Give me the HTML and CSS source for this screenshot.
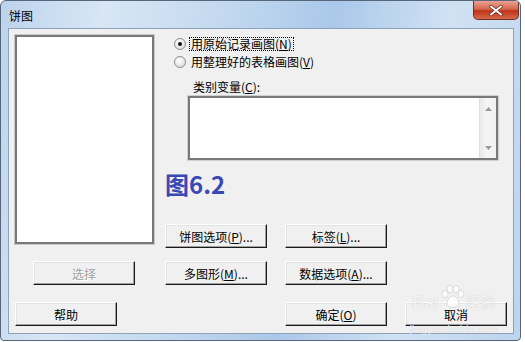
FILE: index.html
```html
<!DOCTYPE html>
<html lang="zh-CN">
<head>
  <meta charset="UTF-8" />
  <title>饼图</title>
  <link rel="stylesheet" href="styles.css">
</head>
<body>
  <div class="window">
    <div class="titlebar">
      <span class="title">饼图</span>
      <div class="close">
        <svg width="14" height="11" viewBox="0 0 14 11">
          <path d="M2 1.5 L12 9.5 M12 1.5 L2 9.5" stroke="#6b2a20" stroke-width="3.4" stroke-linecap="round" />
          <path d="M2 1.5 L12 9.5 M12 1.5 L2 9.5" stroke="#fff" stroke-width="2" stroke-linecap="round" />
        </svg>
      </div>
    </div>

    <div class="client">
      <div class="main">
        <div class="left-col">
          <div class="listbox"></div>
          <button class="btn btn-select" disabled>选择</button>
        </div>

        <div class="right-col">
          <label class="radio">
            <span class="dot checked"></span>
            <span class="radio-text focus">用原始记录画图(<u>N</u>)</span>
          </label>
          <label class="radio">
            <span class="dot"></span>
            <span class="radio-text">用整理好的表格画图(<u>V</u>)</span>
          </label>

          <div class="field-label">类别变量(<u>C</u>):</div>
          <div class="textbox">
            <div class="vscroll">
              <svg width="7" height="4" viewBox="0 0 7 4"><path d="M0 4 L3.5 0 L7 4 Z" fill="#9a9a9a" /></svg>
              <svg width="7" height="4" viewBox="0 0 7 4"><path d="M0 0 L3.5 4 L7 0 Z" fill="#9a9a9a" /></svg>
            </div>
          </div>

          <div class="figure">图6.2</div>

          <div class="btn-grid">
            <button class="btn">饼图选项(<u>P</u>)...</button>
            <button class="btn">标签(<u>L</u>)...</button>
            <button class="btn">多图形(<u>M</u>)...</button>
            <button class="btn">数据选项(<u>A</u>)...</button>
          </div>
        </div>
      </div>

      <div class="footer">
        <button class="btn">帮助</button>
        <button class="btn btn-ok">确定(<u>O</u>)</button>
        <button class="btn btn-cancel">取消</button>
      </div>
    </div>

    <!-- baidu watermark over the bottom-right corner -->
    <div class="watermark">
      <div class="wm-row">
        <span class="wm-bai">Bai</span>
        <svg class="wm-paw" width="27" height="24" viewBox="0 0 27 24">
          <g fill="rgba(255,255,255,0.8)" stroke="rgba(150,150,150,0.35)" stroke-width="0.8">
            <ellipse cx="6" cy="9" rx="3" ry="3.6" />
            <ellipse cx="11" cy="4" rx="3" ry="3.6" />
            <ellipse cx="17" cy="4" rx="3" ry="3.6" />
            <ellipse cx="22" cy="9" rx="3" ry="3.6" />
            <path d="M8 20 C8 14 11 11 14 11 C17 11 20 14 20 20 C20 23 8 23 8 20 Z" />
          </g>
        </svg>
        <span class="wm-cn">经验</span>
      </div>
      <span class="wm-url">jingyan.baidu.com</span>
    </div>
  </div>
</body>
</html>
```

FILE: styles.css
```css
body {
  margin: 0;
  background: #fff;
  font-family: "Noto Sans CJK SC", "DejaVu Sans", sans-serif;
  font-size: 12px;
  color: #000;
}
.window {
  position: relative;
  width: 519px;
  height: 339px;
  border: 1px solid #56677c;
  border-radius: 6px 6px 4px 4px;
  background: linear-gradient(100deg, #bcd3ec 0%, #d8e6f5 18%, #c4d9ef 38%, #aac8ea 58%, #d0e1f3 78%, #bdd4ee 100%);
  display: flex;
  flex-direction: column;
  overflow: hidden;
}
.titlebar {
  height: 27px;
  display: flex;
  align-items: flex-start;
}
.title {
  margin: 7px 0 0 8px;
  line-height: 16px;
  font-size: 12px;
}
.close {
  margin-left: auto;
  margin-right: 1px;
  width: 46px;
  height: 19px;
  box-sizing: border-box;
  border: 1px solid #6e3027;
  border-top: none;
  border-radius: 0 0 5px 5px;
  background: linear-gradient(#eba293 0%, #d4664f 45%, #bd3419 55%, #d8674a 100%);
  display: flex;
  align-items: center;
  justify-content: center;
}
.client {
  flex: 1;
  margin: 0 6px 6px 7px;
  padding: 6px;
  background: #f0f0f0;
  border: 1px solid #8ea3bb;
}
.main {
  display: flex;
}
.left-col {
  width: 139px;
  display: flex;
  flex-direction: column;
}
.listbox {
  height: 209px;
  box-sizing: border-box;
  background: #fff;
  border: 2px solid #787878;
  box-shadow: 0 0 0 1px #c9c9c9;
}
.right-col {
  margin-left: 11px;
  flex: 1;
}
.radio {
  display: flex;
  align-items: center;
  height: 18px;
}
.dot {
  width: 12px;
  height: 12px;
  margin-left: 9px;
  box-sizing: border-box;
  border-radius: 50%;
  border: 1px solid #8e8f8f;
  background: radial-gradient(circle at 40% 35%, #fff 0%, #e6e6e6 60%, #d0d0d0 100%);
  display: flex;
  align-items: center;
  justify-content: center;
}
.dot.checked::after {
  content: "";
  width: 4px;
  height: 4px;
  border-radius: 50%;
  background: #111;
}
.radio-text {
  margin-left: 3px;
  padding: 0 1px;
  line-height: 12px;
  border: 1px dotted transparent;
}
.radio-text.focus {
  border-color: #000;
}
.field-label {
  margin: 9px 0 0 28px;
  line-height: 14px;
  height: 14px;
}
.textbox {
  margin: 2px 0 0 23px;
  width: 310px;
  height: 64px;
  box-sizing: border-box;
  background: #fff;
  border: 2px solid #787878;
  box-shadow: 0 0 0 1px #d0d0d0;
  display: flex;
  justify-content: flex-end;
}
.vscroll {
  width: 17px;
  box-sizing: border-box;
  padding: 9px 0 8px;
  background: linear-gradient(90deg, #e9e9e9, #f5f5f5 40%, #f1f1f1);
  border-left: 1px solid #e0e0e0;
  display: flex;
  flex-direction: column;
  justify-content: space-between;
  align-items: center;
}
.vscroll svg {
  display: block;
}
.figure {
  margin-top: 12px;
  font-size: 24px;
  line-height: 24px;
  font-weight: 700;
  color: #3a48b4;
}
.btn-grid {
  margin-top: 28px;
  display: grid;
  grid-template-columns: 102px 102px;
  column-gap: 18px;
  row-gap: 13px;
}
.btn {
  width: 102px;
  height: 24px;
  box-sizing: border-box;
  padding: 0;
  font: inherit;
  color: #000;
  background: #f0f0f0;
  border: 1px solid;
  border-color: #fff #1a1a1a #1a1a1a #fff;
  box-shadow: inset -1px -1px 0 #a0a0a0, inset 1px 1px 0 #e3e3e3;
}
.btn u {
  text-underline-offset: 1px;
}
.btn-select {
  margin: 17px 0 0 18px;
  color: #a0a0a0;
  text-shadow: 1px 1px 0 #fff;
}
.footer {
  display: flex;
  margin-top: 17px;
}
.btn-ok {
  margin-left: 168px;
}
.btn-cancel {
  margin-left: 18px;
}
.watermark {
  position: absolute;
  left: 404px;
  top: 282px;
  width: 98px;
  display: flex;
  flex-direction: column;
  align-items: center;
  pointer-events: none;
  color: rgba(255, 255, 255, 0.8);
  text-shadow: 0 0 1px rgba(120, 120, 120, 0.4);
}
.wm-row {
  display: flex;
  align-items: flex-end;
  height: 28px;
}
.wm-bai {
  font-family: "Liberation Sans", sans-serif;
  font-size: 17px;
  font-weight: 700;
  line-height: 16px;
}
.wm-paw {
  display: block;
  margin-bottom: 2px;
}
.wm-cn {
  font-size: 15px;
  line-height: 18px;
}
.wm-url {
  font-family: "Liberation Sans", sans-serif;
  font-size: 11px;
  line-height: 11px;
  margin-top: 13px;
}
```
